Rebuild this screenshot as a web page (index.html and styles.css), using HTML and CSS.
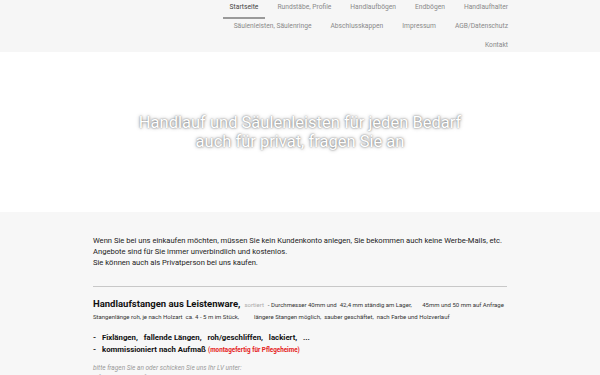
FILE: index.html
```html
<!DOCTYPE html>
<html lang="de">
<head>
  <meta charset="UTF-8">
  <meta name="viewport" content="width=device-width, initial-scale=1.0">
  <title>Handlauf und Säulenleisten</title>
  <link rel="stylesheet" href="styles.css">
</head>
<body>
  <!-- Kopfbereich mit Navigation -->
  <header class="top">
    <nav class="menu">
      <a class="active" href="#">Startseite</a>
      <a href="#">Rundstäbe, Profile</a>
      <a href="#">Handlaufbögen</a>
      <a href="#">Endbögen</a>
      <a href="#">Handlaufhalter</a>
      <a href="#">Säulenleisten, Säulenringe</a>
      <a href="#">Abschlusskappen</a>
      <a href="#">Impressum</a>
      <a href="#">AGB/Datenschutz</a>
      <a href="#">Kontakt</a>
    </nav>
  </header>

  <!-- Titelbereich -->
  <section class="hero">
    <h1>Handlauf und Säulenleisten für jeden Bedarf<br>auch für privat, fragen Sie an</h1>
  </section>

  <!-- Inhalt -->
  <main class="content">
    <div class="inner">
      <p class="intro">
        Wenn Sie bei uns einkaufen möchten, müssen Sie kein Kundenkonto anlegen, Sie bekommen auch keine Werbe-Mails, etc.<br>
        Angebote sind für Sie immer unverbindlich und kostenlos.<br>
        Sie können auch als Privatperson bei uns kaufen.
      </p>

      <hr class="line">

      <div class="product">
        <p class="product-head">
          <strong>Handlaufstangen aus Leistenware,</strong>
          <span class="grey">sortiert</span>
          <span class="small">- Durchmesser 40mm und&nbsp; 42,4 mm ständig am Lager,&nbsp;&nbsp;&nbsp;&nbsp;&nbsp;&nbsp; 45mm und 50 mm auf Anfrage</span>
        </p>
        <p class="small">Stangenlänge roh, je nach Holzart&nbsp; ca. 4 - 5 m im Stück,&nbsp;&nbsp;&nbsp;&nbsp;&nbsp;&nbsp;&nbsp;&nbsp;&nbsp; längere Stangen möglich,&nbsp; sauber geschäftet,&nbsp; nach Farbe und Holzverlauf</p>

        <ul class="points">
          <li>Fixlängen,&nbsp;&nbsp; fallende Längen,&nbsp;&nbsp; roh/geschliffen,&nbsp;&nbsp; lackiert,&nbsp;&nbsp; ...</li>
          <li>kommissioniert nach Aufmaß <span class="red">(montagefertig für Pflegeheime)</span></li>
        </ul>

        <p class="ask">bitte fragen Sie an oder schicken Sie uns Ihr LV unter:</p>
        <p class="ask">info@holzhandlauf.de&nbsp; - oder -&nbsp; Fax: 09946 - 90 20 705</p>
      </div>
    </div>
  </main>
</body>
</html>
```

FILE: styles.css
```css
body {
  margin: 0;
  font-family: 'Roboto', 'Liberation Sans', sans-serif;
  color: #222;
  background-color: #f7f7f7;
}

p {
  margin: 0;
}

/* Navigation oben */
.top {
  background-color: #f6f6f6;
  height: 52px;
}

.menu {
  width: 305px;
  margin-left: auto;
  margin-right: 85px;
  display: flex;
  flex-wrap: wrap;
  justify-content: flex-end;
  column-gap: 5px;
}

.menu a {
  display: block;
  padding: 2px 7px 0;
  height: 15px;
  line-height: 10px;
  font-size: 6.7px;
  color: #8a8a8a;
  text-decoration: none;
  border-bottom: 2px solid transparent;
}

.menu a.active {
  color: #444;
  border-bottom-color: #9a9a9a;
}

/* Titel */
.hero {
  background-color: #fff;
  height: 160px;
  display: flex;
  align-items: center;
  justify-content: center;
}

.hero h1 {
  margin: 0;
  font-size: 16.5px;
  font-weight: 400;
  line-height: 19px;
  text-align: center;
  color: #fff;
  text-shadow: 0 0 2px rgba(0, 0, 0, 0.55), 0 0 4px rgba(0, 0, 0, 0.3);
}

/* Inhalt */
.content {
  padding-top: 23px;
}

.inner {
  width: 414px;
  margin: 0 auto;
}

.intro {
  font-size: 7.6px;
  line-height: 11px;
  color: #222;
}

.line {
  border: 0;
  border-top: 1px solid #c8c8c8;
  margin: 18px 0 8px;
}

.product-head {
  line-height: 14px;
}

.product-head strong {
  font-size: 9.5px;
  color: #111;
}

.grey {
  font-size: 6px;
  color: #aaa;
}

.small {
  font-size: 6px;
  line-height: 10px;
  color: #333;
}

.points {
  list-style: none;
  margin: 10px 0 0;
  padding: 0;
}

.points li {
  font-size: 7.8px;
  font-weight: 700;
  line-height: 12px;
  color: #111;
}

.points li::before {
  content: "-";
  display: inline-block;
  width: 9px;
}

.red {
  font-size: 6.3px;
  color: #e52020;
}

.ask {
  font-size: 6.5px;
  font-style: italic;
  color: #999;
  line-height: 10px;
}

.points + .ask {
  margin-top: 7px;
}
```
